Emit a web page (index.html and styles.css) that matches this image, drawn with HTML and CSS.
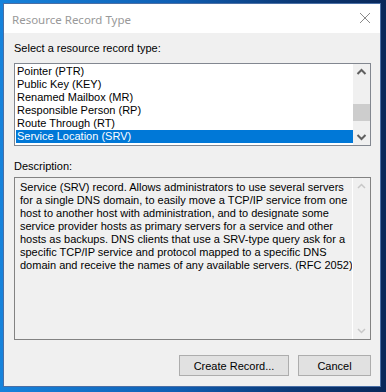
FILE: index.html
```html
<!DOCTYPE html>
<html lang="en">
<head>
  <meta charset="UTF-8">
  <title>Resource Record Type</title>
  <link rel="stylesheet" href="styles.css">
</head>
<body>
  <div class="window">
    <div class="titlebar">
      <span class="title">Resource Record Type</span>
      <svg class="close" width="12" height="12" viewBox="0 0 12 12">
        <path d="M1 1 L11 11 M11 1 L1 11" stroke="#8a8a8a" stroke-width="1" fill="none"/>
      </svg>
    </div>
    <div class="content">
      <div class="label">Select a resource record type:</div>
      <div class="listbox">
        <ul class="items">
          <li>Pointer (PTR)</li>
          <li>Public Key (KEY)</li>
          <li>Renamed Mailbox (MR)</li>
          <li>Responsible Person (RP)</li>
          <li>Route Through (RT)</li>
          <li class="selected">Service Location (SRV)</li>
        </ul>
        <div class="scrollbar">
          <svg class="arrow" width="17" height="17" viewBox="0 0 17 17">
            <path d="M4.5 10 L8.5 6 L12.5 10" stroke="#606060" stroke-width="2" fill="none"/>
          </svg>
          <div class="track">
            <div class="thumb"></div>
          </div>
          <svg class="arrow" width="17" height="17" viewBox="0 0 17 17">
            <path d="M4.5 7 L8.5 11 L12.5 7" stroke="#606060" stroke-width="2" fill="none"/>
          </svg>
        </div>
      </div>

      <div class="label desc-label">Description:</div>
      <div class="descbox">
        <p class="desc">Service (SRV) record. Allows administrators to use several servers<br>for a single DNS domain, to easily move a TCP/IP service from one<br>host to another host with administration, and to designate some<br>service provider hosts as primary servers for a service and other<br>hosts as backups. DNS clients that use a SRV-type query ask for a<br>specific TCP/IP service and protocol mapped to a specific DNS<br>domain and receive the names of any available servers. (RFC 2052)</p>
        <div class="scrollbar disabled">
          <svg class="arrow" width="17" height="17" viewBox="0 0 17 17">
            <path d="M5 10 L8.5 6.5 L12 10" stroke="#c8c8c8" stroke-width="1.5" fill="none"/>
          </svg>
          <div class="track"></div>
          <svg class="arrow" width="17" height="17" viewBox="0 0 17 17">
            <path d="M5 7 L8.5 10.5 L12 7" stroke="#c8c8c8" stroke-width="1.5" fill="none"/>
          </svg>
        </div>
      </div>

      <div class="buttons">
        <button class="btn create">Create Record...</button>
        <button class="btn cancel">Cancel</button>
      </div>
    </div>
  </div>
</body>
</html>
```

FILE: styles.css
```css
body {
  margin: 0;
  width: 386px;
  height: 392px;
  overflow: hidden;
  background: linear-gradient(90deg, #1683dc 0%, #0f5fb4 45%, #0b3a78 75%, #09285a 100%);
  font-family: "Liberation Sans", Arial, sans-serif;
}
.window {
  margin: 3px 0 0 3px;
  width: 376px;
  height: 382px;
  border: 1px solid #4a6fa5;
  background: #f0f0f0;
  display: flex;
  flex-direction: column;
}
.titlebar {
  height: 29px;
  background: #ffffff;
  display: flex;
  align-items: center;
  justify-content: space-between;
  padding: 0 9px 0 8px;
}
.title {
  font-family: "Noto Sans", sans-serif;
  font-size: 11.5px;
  color: #999999;
  margin-top: 1px;
}
.close {
  margin-top: -1px;
}
.content {
  padding: 6px 9px 0 10px;
  display: flex;
  flex-direction: column;
}
.label {
  font-size: 11px;
  color: #000;
  height: 13px;
  line-height: 13px;
  margin-top: 3px;
}
.listbox {
  margin-top: 8px;
  height: 81px;
  border: 1px solid #828790;
  background: #fff;
  display: flex;
}
.items {
  list-style: none;
  margin: 0;
  padding: 1px 0 0 1px;
  flex: 1;
}
.items li {
  font-size: 11px;
  height: 13px;
  line-height: 13px;
  padding-left: 1px;
}
.items li.selected {
  background: #0078d7;
  color: #fff;
}
.scrollbar {
  width: 17px;
  flex: none;
  background: #f0f0f0;
  display: flex;
  flex-direction: column;
}
.arrow {
  display: block;
  flex: none;
}
.track {
  flex: 1;
  position: relative;
}
.thumb {
  position: absolute;
  left: 0;
  top: 23px;
  width: 17px;
  height: 17px;
  background: #cdcdcd;
}
.desc-label {
  margin-top: 14px;
}
.descbox {
  margin-top: 4px;
  height: 161px;
  border: 1px solid #828282;
  display: flex;
}
.desc {
  flex: 1;
  min-width: 0;
  margin: 0;
  padding: 3px 0 0 5px;
  font-size: 11px;
  line-height: 13px;
  color: #000;
  white-space: nowrap;
}
.scrollbar.disabled {
  border-left: 1px solid #ffffff;
}
.buttons {
  display: flex;
  justify-content: flex-end;
  gap: 9px;
  margin-top: 15px;
}
.btn {
  height: 21px;
  border: 1px solid #adadad;
  background: #e1e1e1;
  font-family: "Liberation Sans", Arial, sans-serif;
  font-size: 11px;
  color: #000;
  padding: 0;
}
.create {
  width: 110px;
}
.cancel {
  width: 73px;
}
```
